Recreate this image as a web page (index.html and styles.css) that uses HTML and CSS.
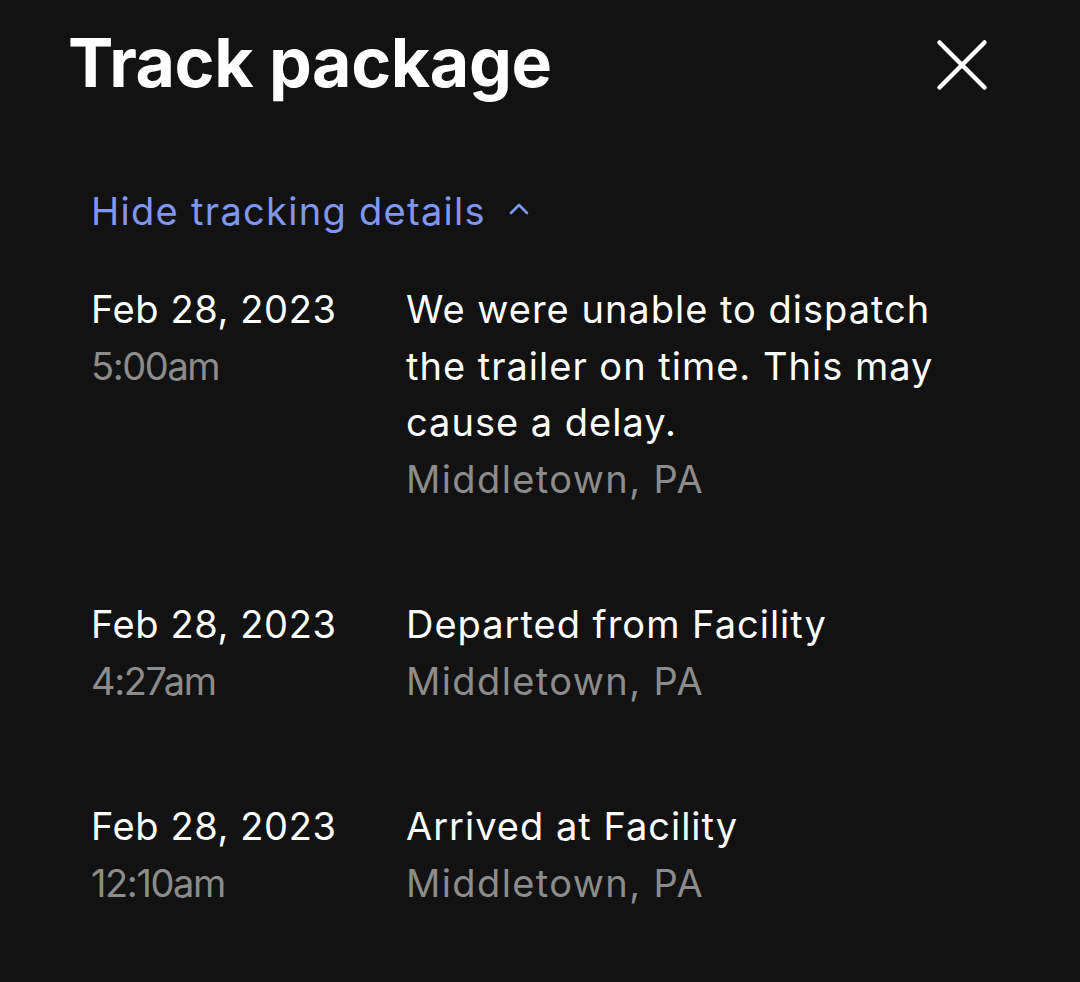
FILE: index.html
```html
<!DOCTYPE html>
<html lang="en">
<head>
<meta charset="utf-8">
<title>Track package</title>
<link rel="stylesheet" href="styles.css">
</head>
<body>
<div class="sheet">
  <header class="header">
    <h1 class="title">Track package</h1>
    <button class="close" aria-label="Close">
      <svg width="52" height="52" viewBox="0 0 52 52" fill="none" stroke="#ffffff" stroke-width="4.5" stroke-linecap="round">
        <path d="M3.5 3.5 L48.5 48.5 M48.5 3.5 L3.5 48.5"/>
      </svg>
    </button>
  </header>
  <section class="details">
    <button class="toggle">Hide tracking details
      <svg class="chev" width="22" height="14" viewBox="0 0 22 14" fill="none" stroke="#7f97f0" stroke-width="2.6" stroke-linecap="round" stroke-linejoin="round">
        <path d="M3 11 L11 3 L19 11"/>
      </svg>
    </button>
    <ul class="events">
      <li class="event">
        <div class="when">
          <div class="date">Feb 28, 2023</div>
          <div class="time">5:00am</div>
        </div>
        <div class="what">
          <div class="desc">We were unable to dispatch the trailer on time. This may cause a delay.</div>
          <div class="place">Middletown, PA</div>
        </div>
      </li>
      <li class="event">
        <div class="when">
          <div class="date">Feb 28, 2023</div>
          <div class="time">4:27am</div>
        </div>
        <div class="what">
          <div class="desc">Departed from Facility</div>
          <div class="place">Middletown, PA</div>
        </div>
      </li>
      <li class="event">
        <div class="when">
          <div class="date">Feb 28, 2023</div>
          <div class="time">12:10am</div>
        </div>
        <div class="what">
          <div class="desc">Arrived at Facility</div>
          <div class="place">Middletown, PA</div>
        </div>
      </li>
    </ul>
  </section>
</div>
</body>
</html>
```
FILE: styles.css
```css
* { box-sizing: border-box; }
html, body {
  margin: 0;
  padding: 0;
  background: #121212;
}
body {
  font-family: Inter, "Noto Sans", "Liberation Sans", sans-serif;
  color: #ffffff;
  width: 1080px;
  height: 982px;
  overflow: hidden;
}
.sheet {
  padding: 22px 0 0 68px;
}
.header {
  display: flex;
  justify-content: space-between;
  align-items: flex-start;
  padding-right: 92px;
}
.title {
  margin: 0;
  font-size: 68px;
  font-weight: 700;
  line-height: 80px;
  letter-spacing: -0.4px;
}
.close {
  background: none;
  border: 0;
  padding: 0;
  margin-top: 17px;
  display: flex;
}
.details {
  padding-left: 23px;
  margin-top: 86px;
}
.toggle {
  background: none;
  border: 0;
  padding: 0;
  font-family: inherit;
  font-size: 38px;
  line-height: 46px;
  color: #7f97f0;
  display: flex;
  align-items: center;
  gap: 22px;
  letter-spacing: 1.3px;
}
.chev { margin-top: -4px; }
.events {
  list-style: none;
  margin: 47px 0 0;
  padding: 0;
  display: flex;
  flex-direction: column;
  gap: 89px;
}
.event {
  display: grid;
  grid-template-columns: 315px 560px;
  font-size: 38px;
  line-height: 56.5px;
}
.date { color: #ffffff; letter-spacing: 0.6px; }
.time { color: #8c8c8c; letter-spacing: -1.4px; }
.desc { color: #ffffff; letter-spacing: 1px; }
.place { color: #8c8c8c; letter-spacing: 1.4px; }
```
